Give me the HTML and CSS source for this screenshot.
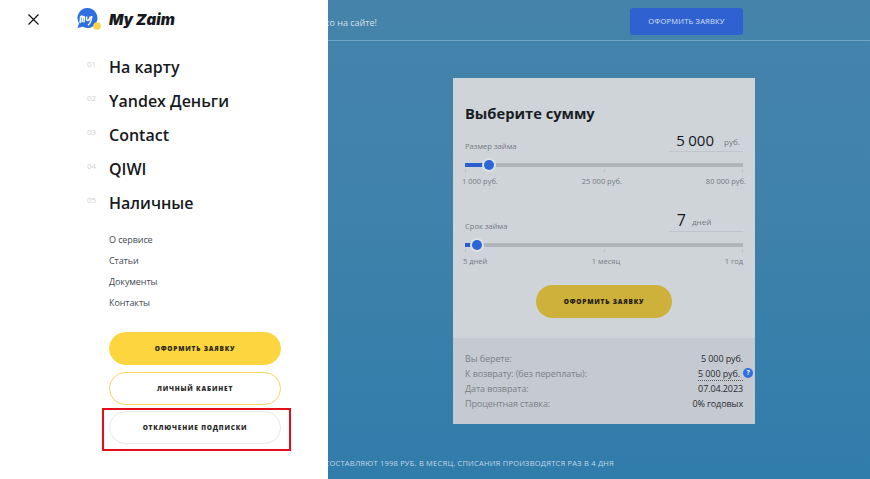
FILE: index.html
```html
<!doctype html>
<html lang="ru">
  <head>
    <meta charset="UTF-8" />
    <meta name="viewport" content="width=device-width, initial-scale=1.0" />
    <title>My Zaim</title>
    <link rel="stylesheet" href="styles.css">
  </head>
  <body>
    <div class="page">
      <header class="topbar">
        <span class="top-note">Получите займ только на сайте!</span>
        <a class="top-button">ОФОРМИТЬ ЗАЯВКУ</a>
      </header>

      <main class="card">
        <div class="card-main">
          <h2>Выберите сумму</h2>

          <div class="field-head">
            <span class="field-label">Размер займа</span>
            <span class="field-value"><b>5 000</b><i>руб.</i></span>
          </div>
          <div class="slider">
            <div class="slider-fill fill-sum"></div>
            <div class="slider-thumb thumb-sum"></div>
          </div>
          <div class="slider-marks">
            <span>1 000 руб.</span>
            <span>25 000 руб.</span>
            <span>80 000 руб.</span>
          </div>

          <div class="field-head field-term">
            <span class="field-label">Срок займа</span>
            <span class="field-value value-term"><b>7</b><i>дней</i></span>
          </div>
          <div class="slider">
            <div class="slider-fill fill-term"></div>
            <div class="slider-thumb thumb-term"></div>
          </div>
          <div class="slider-marks marks-term">
            <span>5 дней</span>
            <span>1 месяц</span>
            <span>1 год</span>
          </div>

          <a class="apply-button">ОФОРМИТЬ ЗАЯВКУ</a>
        </div>

        <div class="summary">
          <div class="summary-row"><span>Вы берете:</span><b>5 000 руб.</b></div>
          <div class="summary-row">
            <span>К возврату: (без переплаты):</span>
            <b class="dotted">5 000 руб.<em class="help">?</em></b>
          </div>
          <div class="summary-row"><span>Дата возврата:</span><b>07.04.2023</b></div>
          <div class="summary-row"><span>Процентная ставка:</span><b>0% годовых</b></div>
        </div>
      </main>

      <footer class="bottom-note">СТОИМОСТЬ ПОДПИСКИ СОСТАВЛЯЮТ 1998 РУБ. В МЕСЯЦ. СПИСАНИЯ ПРОИЗВОДЯТСЯ РАЗ В 4 ДНЯ</footer>
    </div>

    <aside class="menu">
      <div class="menu-head">
        <svg class="close" width="11" height="11" viewBox="0 0 11 11">
          <path d="M.5.5l10 10M10.5.5l-10 10" stroke="#111" stroke-width="1.2" fill="none" />
        </svg>
        <svg class="logo" width="24" height="24" viewBox="0 0 24 24">
          <path d="M10.5 0a10 10 0 1 1-4.8 18.8L.4 20l1.7-4.600A10 10 0 0 1 10.500 0z" fill="#2f6fe0" />
          <path d="M3.600 8.500l-.5 6.500M3.800 9c1.200-1.500 1.900-1 1.700.8l-.4 4.400M5.600 9.500c1.200-1.600 2-1 1.800.8l-.4 4M9.800 8.500c-.6 2.800-.2 4.200 1 4 1.300-.2 2-1.800 2.500-4M14.800 8c-.3 3.500-1.200 7.500-3.800 9.200" stroke="#fff" stroke-width="1.500" fill="none" />
          <circle cx="20" cy="18" r="3.800" fill="#f8d247" />
        </svg>
        <span class="brand">My Zaim</span>
      </div>

      <nav class="main-links">
        <a><small>01</small>На карту</a>
        <a><small>02</small>Yandex Деньги</a>
        <a><small>03</small>Contact</a>
        <a><small>04</small>QIWI</a>
        <a><small>05</small>Наличные</a>
      </nav>

      <nav class="sub-links">
        <a>О сервисе</a>
        <a>Статьи</a>
        <a>Документы</a>
        <a>Контакты</a>
      </nav>

      <div class="menu-buttons">
        <a class="pill pill-yellow">ОФОРМИТЬ ЗАЯВКУ</a>
        <a class="pill pill-outline">ЛИЧНЫЙ КАБИНЕТ</a>
        <a class="pill pill-grey">ОТКЛЮЧЕНИЕ ПОДПИСКИ</a>
      </div>
      <div class="red-frame"></div>
    </aside>
  </body>
</html>
```

FILE: styles.css
```css
html,
body {
  margin: 0;
  height: 100%;
  overflow: hidden;
}
body {
  position: relative;
  font-family: "Open Sans", "Noto Sans", sans-serif;
  background: linear-gradient(180deg, #4583aa 0%, #3f82ab 45%, #307cab 100%);
}
h2 {
  margin: 0;
}
a {
  display: block;
}

/* page behind the menu */
.page {
  height: 479px;
  display: flex;
  flex-direction: column;
}
.topbar {
  height: 40px;
  flex: none;
  display: flex;
  align-items: flex-start;
  border-bottom: 1px solid #70a6c6;
}
.top-note {
  width: 377px;
  flex: none;
  margin-top: 15px;
  text-align: right;
  font-size: 9px;
  line-height: 16px;
  color: #d5e0e8;
}
.top-button {
  width: 113px;
  height: 27px;
  margin: 8px 0 0 253px;
  background: #2f62d0;
  border-radius: 3px;
  text-align: center;
  font-size: 7.5px;
  line-height: 27px;
  letter-spacing: 0.2px;
  color: #d5e0f2;
}

/* calculator */
.card {
  width: 302px;
  height: 346px;
  flex: none;
  margin: 37px 0 0 453px;
  background: #cfd4d9;
  display: flex;
  flex-direction: column;
}
.card-main {
  flex: 1;
  padding: 24px 12px 0;
}
.card-main h2 {
  font-size: 14.7px;
  line-height: 22px;
  font-weight: 700;
  color: #1a1e24;
}
.field-head {
  display: flex;
  justify-content: space-between;
  align-items: flex-end;
  height: 26px;
  margin-top: 2px;
}
.field-term {
  margin-top: 19px;
}
.field-label {
  font-size: 7.6px;
  line-height: 14px;
  color: #747a81;
  margin-bottom: -1px;
}
.field-value {
  width: 74px;
  height: 26px;
  box-sizing: border-box;
  padding-top: 3px;
  display: flex;
  justify-content: flex-end;
  align-items: center;
  border-bottom: 1px solid #bfc5cb;
}
.field-value b {
  font-weight: 400;
  font-size: 15px;
  word-spacing: -0.5px;
  color: #14181d;
}
.field-value i {
  font-style: normal;
  font-size: 8px;
  color: #747a81;
  width: 19px;
  margin-left: 10px;
  padding-top: 3px;
}
.value-term b {
  font-size: 16px;
}
.value-term i {
  width: 51px;
  margin-left: 6px;
}
.slider {
  position: relative;
  height: 4px;
  margin: 11px 0 0;
  background: #b0b5ba;
}
.slider::after {
  content: "";
  position: absolute;
  left: 0;
  right: 0;
  top: 6px;
  height: 3px;
  background:
    linear-gradient(#bcc1c6, #bcc1c6) left / 1px 3px no-repeat,
    linear-gradient(#bcc1c6, #bcc1c6) center / 1px 3px no-repeat,
    linear-gradient(#bcc1c6, #bcc1c6) right / 1px 3px no-repeat;
}
.slider-fill {
  position: absolute;
  left: 0;
  top: 0;
  height: 4px;
  background: #2a5fcb;
}
.fill-sum {
  width: 20px;
}
.fill-term {
  width: 6px;
}
.slider-thumb {
  position: absolute;
  top: -3px;
  width: 10px;
  height: 10px;
  background: #2a66d6;
  border-radius: 50%;
  box-shadow: 0 0 0 2px #dde1e6;
}
.thumb-sum {
  left: 19px;
}
.thumb-term {
  left: 7px;
}
.slider-marks {
  display: flex;
  justify-content: space-between;
  margin: 8px -3px 0;
  font-size: 7.5px;
  line-height: 12px;
  color: #747a81;
}
.marks-term {
  margin: 8px 0 0 -2px;
}
.apply-button {
  width: 136px;
  height: 33px;
  margin: 18px auto 0;
  background: #cdb13a;
  border-radius: 17px;
  text-align: center;
  font-size: 6.5px;
  font-weight: 800;
  line-height: 33px;
  letter-spacing: 0.8px;
  color: #1d1a0c;
}
.summary {
  height: 86px;
  flex: none;
  box-sizing: border-box;
  padding: 13px 12px 0;
  background: #c5cad0;
  font-size: 9px;
  letter-spacing: -0.1px;
  line-height: 15px;
}
.summary-row {
  display: flex;
  justify-content: space-between;
  color: #7a8088;
}
.summary-row b {
  position: relative;
  font-weight: 400;
  color: #272c33;
}
.summary-row .dotted {
  height: 14px;
  padding-right: 3px;
  border-bottom: 1px dotted #555;
}
.help {
  position: absolute;
  left: 100%;
  top: 2px;
  width: 10px;
  height: 10px;
  border-radius: 50%;
  background: #2f6ee0;
  color: #fff;
  font-size: 7px;
  font-style: normal;
  font-weight: 700;
  line-height: 10px;
  text-align: center;
}
.bottom-note {
  width: 614px;
  margin-top: 33px;
  white-space: nowrap;
  display: flex;
  justify-content: flex-end;
  font-size: 7.5px;
  line-height: 12px;
  letter-spacing: 0.22px;
  color: #c3d6e3;
}

/* slide-out menu */
.menu {
  position: absolute;
  left: 0;
  top: 0;
  width: 328px;
  height: 479px;
  background: #fff;
}
.menu-head {
  display: flex;
  align-items: center;
  height: 38px;
  padding-left: 28px;
}
.logo {
  margin: 2px 0 0 38px;
}
.brand {
  margin-left: 8px;
  font-family: Inter, sans-serif;
  font-size: 15px;
  font-style: italic;
  font-weight: 900;
  color: #17191e;
}
.main-links {
  margin: 12px 0 0 109px;
}
.main-links a {
  position: relative;
  height: 34px;
  font-size: 16px;
  font-weight: 600;
  line-height: 34px;
  color: #17191e;
}
.main-links small {
  position: absolute;
  left: -22px;
  top: 9px;
  font-size: 8px;
  font-weight: 400;
  line-height: 10px;
  color: #cfd1d5;
}
.sub-links {
  margin: 9px 0 0 109px;
}
.sub-links a {
  height: 21px;
  font-size: 9px;
  letter-spacing: -0.1px;
  line-height: 21px;
  color: #444a50;
}
.menu-buttons {
  display: flex;
  flex-direction: column;
  gap: 6.5px;
  width: 172px;
  margin: 19px 0 0 109px;
}
.pill {
  height: 33px;
  box-sizing: border-box;
  border-radius: 17px;
  text-align: center;
  font-size: 6.5px;
  font-weight: 800;
  line-height: 31px;
  letter-spacing: 0.8px;
  color: #2a2a2a;
}
.pill-yellow {
  background: #fdd63f;
  border: 1px solid #fdd63f;
  color: #2b2408;
}
.pill-outline {
  border: 1.5px solid #f6d65c;
}
.pill-grey {
  border: 1.5px solid #e8e9ec;
}
.red-frame {
  position: absolute;
  left: 102px;
  top: 408px;
  width: 185px;
  height: 39px;
  border: 2px solid #e3101c;
}
```
